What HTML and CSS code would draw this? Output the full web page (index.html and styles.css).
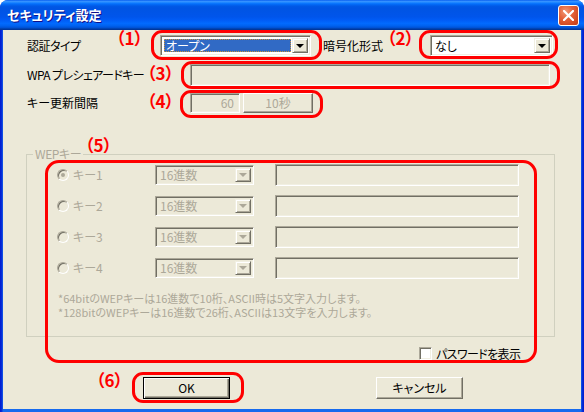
FILE: index.html
```html
<!DOCTYPE html>
<html lang="ja">
<head>
<meta charset="utf-8">
<title>セキュリティ設定</title>
<link rel="stylesheet" href="styles.css">
</head>
<body>
<div class="window">
  <div class="titlebar">
    <span class="title">セキュリティ設定</span>
    <span class="close">
      <svg width="11" height="11" viewBox="0 0 11 11"><path d="M1 1 L10 10 M10 1 L1 10" stroke="#fff" stroke-width="2.2" stroke-linecap="square"/></svg>
    </span>
  </div>
  <div class="client">
    <div class="row r1">
      <span class="lbl lbl-auth">認証タイプ</span>
      <div class="combo combo-auth"><span class="ctext"><span class="sel">オープン</span></span><span class="drop"><i class="arrow"></i></span></div>
      <span class="lbl lbl-enc">暗号化形式</span>
      <div class="combo combo-enc"><span class="ctext">なし</span><span class="drop"><i class="arrow"></i></span></div>
    </div>
    <div class="row r2">
      <span class="lbl lbl-wide tight">WPA プレシェアードキー</span>
      <div class="field field-psk"></div>
    </div>
    <div class="row r3">
      <span class="lbl lbl-wide">キー更新間隔</span>
      <div class="field field-num">60</div>
      <div class="btn btn-unit">10秒</div>
    </div>
    <div class="group">
      <span class="legend">WEPキー</span>
      <div class="wrow">
        <span class="opt"><span class="radio on"></span>キー1</span>
        <div class="combo combo-dis"><span class="ctext">16進数</span><span class="drop"><i class="arrow"></i></span></div>
        <div class="field field-key"></div>
      </div>
      <div class="wrow">
        <span class="opt"><span class="radio"></span>キー2</span>
        <div class="combo combo-dis"><span class="ctext">16進数</span><span class="drop"><i class="arrow"></i></span></div>
        <div class="field field-key"></div>
      </div>
      <div class="wrow">
        <span class="opt"><span class="radio"></span>キー3</span>
        <div class="combo combo-dis"><span class="ctext">16進数</span><span class="drop"><i class="arrow"></i></span></div>
        <div class="field field-key"></div>
      </div>
      <div class="wrow">
        <span class="opt"><span class="radio"></span>キー4</span>
        <div class="combo combo-dis"><span class="ctext">16進数</span><span class="drop"><i class="arrow"></i></span></div>
        <div class="field field-key"></div>
      </div>
      <div class="note">
        <p class="nline">*64bitのWEPキーは16進数で10桁、ASCII時は5文字入力します。</p>
        <p class="nline">*128bitのWEPキーは16進数で26桁、ASCIIは13文字を入力します。</p>
      </div>
    </div>
    <div class="row r-check">
      <span class="check"></span><span class="check-lbl">パスワードを表示</span>
    </div>
    <div class="row r-btns">
      <div class="btn btn-ok">OK</div>
      <div class="btn btn-cancel">キャンセル</div>
    </div>
  </div>

  <div class="mark m1"></div><span class="num n1">（1）</span>
  <div class="mark m2"></div><span class="num n2">（2）</span>
  <div class="mark m3"></div><span class="num n3">（3）</span>
  <div class="mark m4"></div><span class="num n4">（4）</span>
  <div class="mark m5"></div><span class="num n5">（5）</span>
  <div class="mark m6"></div><span class="num n6">（6）</span>
</div>
</body>
</html>
```
FILE: styles.css
```css
* { box-sizing: border-box; }

body {
  margin: 0;
  background: #fff;
  font-family: "Noto Sans CJK JP", "Liberation Sans", sans-serif;
  font-size: 12px;
  font-feature-settings: "palt";
  color: #000;
}

.window {
  position: relative;
  width: 584px;
  height: 412px;
  background: linear-gradient(90deg, #0019CF 0, #0831D9 2px, #166AEE 3px, #166AEE 581px, #0831D9 582px, #0019CF 584px);
  border-radius: 8px 8px 0 0;
  display: flex;
  flex-direction: column;
  overflow: hidden;
}

.titlebar {
  height: 30px;
  flex: none;
  display: flex;
  align-items: center;
  justify-content: space-between;
  padding: 0 5px 0 7px;
  background: linear-gradient(180deg, #0058EE 0%, #3A93FF 4%, #288EFF 7%, #127DFF 10%, #036FFC 13%, #0262EE 17%, #0057E5 22%, #0054E3 28%, #0055EB 56%, #005BF5 66%, #026AFE 78%, #0062EF 86%, #0052D6 92%, #0040AB 96%, #003092 100%);
}

.title {
  color: #fff;
  font-weight: bold;
  font-size: 13px;
  line-height: 16px;
  text-shadow: 1px 1px #0F1089;
}

.close {
  width: 21px;
  height: 21px;
  border: 1px solid #fff;
  border-radius: 3px;
  background: radial-gradient(circle at 35% 30%, #F29A78 0%, #E4623A 40%, #D24A22 75%, #C13C16 100%);
  display: flex;
  align-items: center;
  justify-content: center;
}

.client {
  flex: 1;
  margin: 0 3px 3px;
  background: #ECE9D8;
  padding-top: 5px;
}

.row {
  display: flex;
  align-items: center;
  padding-left: 24px;
}

.lbl { white-space: nowrap; line-height: 14px; }
.tight { letter-spacing: -0.6px; }
.lbl-auth { width: 133px; letter-spacing: -0.5px; }
.lbl-enc { width: 107px; margin-left: 12px; }
.lbl-wide { width: 163px; }

.r1 { height: 21px; }
.r2 { height: 22px; margin-top: 8px; }
.r3 { height: 20px; margin-top: 7px; }

/* combo boxes */
.combo {
  display: flex;
  height: 21px;
  padding: 2px;
  border: 1px solid;
  border-color: #ACA899 #fff #fff #ACA899;
  box-shadow: inset 1px 1px #716F64, inset -1px -1px #F1EFE2;
  background: #fff;
}
.combo-auth { width: 151px; }
.combo-enc { width: 123px; }
.ctext {
  flex: 1;
  display: flex;
  align-items: center;
  padding-left: 2px;
  line-height: 14px;
  white-space: nowrap;
}
.combo-auth .ctext { padding: 1px; }
.sel {
  flex: 1;
  align-self: stretch;
  display: flex;
  align-items: center;
  padding-left: 1px;
  background: #316AC5;
  color: #fff;
  border: 1px dotted #CE953A;
}
.drop {
  width: 16px;
  flex: none;
  display: flex;
  align-items: center;
  justify-content: center;
  background: #ECE9D8;
  border: 1px solid;
  border-color: #F1EFE2 #716F64 #716F64 #F1EFE2;
  box-shadow: inset 1px 1px #fff, inset -1px -1px #ACA899;
}
.arrow {
  width: 0;
  height: 0;
  border-left: 4px solid transparent;
  border-right: 4px solid transparent;
  border-top: 4px solid #000;
  margin-left: -1px;
}
.combo-dis { width: 99px; height: 20px; background: #ECE9D8; color: #ACA899; margin-right: 21px; }
.combo-dis .arrow { border-top-color: #ACA899; }

/* edit fields */
.field {
  height: 22px;
  border: 1px solid;
  border-color: #ACA899 #fff #fff #ACA899;
  box-shadow: inset 1px 1px #716F64, inset -1px -1px #F1EFE2;
  background: #ECE9D8;
  color: #ACA899;
  line-height: 14px;
}
.field-psk { width: 360px; }
.field-num {
  width: 50px;
  height: 20px;
  text-align: right;
  padding: 2px 5px 0 0;
}
.field-key { width: 244px; }

/* buttons */
.btn {
  display: flex;
  align-items: center;
  justify-content: center;
  background: #ECE9D8;
  border: 1px solid;
  border-color: #fff #716F64 #716F64 #fff;
  box-shadow: inset -1px -1px #ACA899;
  line-height: 14px;
  white-space: nowrap;
}
.btn-unit { width: 70px; height: 20px; margin-left: 3px; color: #ACA899; }

/* group box */
.group {
  position: relative;
  margin: 41px 0 0 23px;
  width: 529px;
  height: 183px;
  border: 1px solid #D0D0BF;
  padding: 9px 0 0 30px;
}
.legend {
  position: absolute;
  top: -8px;
  left: 6px;
  padding: 0 2px;
  background: #ECE9D8;
  color: #ACA899;
  line-height: 14px;
  letter-spacing: -0.4px;
}
.wrow {
  display: flex;
  align-items: center;
  height: 22px;
  margin-bottom: 9px;
}
.opt {
  width: 98px;
  display: flex;
  align-items: center;
  gap: 4px;
  color: #ACA899;
  line-height: 14px;
}
.radio {
  position: relative;
  width: 12px;
  height: 12px;
  border-radius: 50%;
  border: 1px solid;
  border-color: #ACA899 #fff #fff #ACA899;
  box-shadow: inset 1px 1px #716F64;
  background: #ECE9D8;
}
.radio.on::after {
  content: "";
  position: absolute;
  left: 3px;
  top: 3px;
  width: 4px;
  height: 4px;
  border-radius: 50%;
  background: #ACA899;
}

.note {
  margin: 12px 0 0 1px;
  color: #ACA899;
  font-size: 11px;
  white-space: nowrap;
}
.nline { margin: 0; line-height: 14px; }

/* checkbox */
.r-check { margin-top: 10px; padding-left: 416px; height: 13px; }
.check {
  width: 13px;
  height: 13px;
  border: 1px solid;
  border-color: #ACA899 #fff #fff #ACA899;
  box-shadow: inset 1px 1px #716F64, inset -1px -1px #F1EFE2;
  background: #fff;
}
.check-lbl { margin-left: 4px; line-height: 14px; letter-spacing: -0.6px; }

.r-btns { margin-top: 17px; padding-left: 140px; gap: 146px; }
.btn-ok, .btn-cancel { width: 87px; height: 22px; }
.btn-ok {
  border: 1px solid #000;
  box-shadow: inset 1px 1px #fff, inset -1px -1px #716F64, inset -2px -2px #ACA899;
}

/* red annotations (overlay) */
.mark {
  position: absolute;
  border: 3px solid #FF0000;
  border-radius: 11px;
}
.m1 { left: 151px; top: 30px; width: 171px; height: 30px; }
.m2 { left: 419px; top: 30px; width: 139px; height: 29px; }
.m3 { left: 181px; top: 61px; width: 379px; height: 28px; }
.m4 { left: 180px; top: 90px; width: 143px; height: 28px; }
.m5 { left: 45px; top: 160px; width: 492px; height: 203px; border-radius: 14px; }
.m6 { left: 132px; top: 372px; width: 112px; height: 31px; }

.num {
  position: absolute;
  color: #FF0000;
  font-weight: bold;
  font-size: 17px;
  line-height: 18px;
  white-space: nowrap;
}
.n1 { left: 116px; top: 29px; }
.n2 { left: 387px; top: 29px; }
.n3 { left: 147px; top: 64px; }
.n4 { left: 147px; top: 92px; }
.n5 { left: 85px; top: 136px; }
.n6 { left: 96px; top: 371px; }
```
